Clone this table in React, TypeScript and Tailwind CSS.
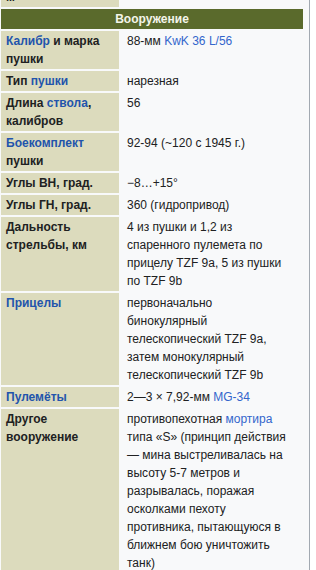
import React from "react";

type Row = { label: React.ReactNode; value: React.ReactNode };

// links inside the value column
const A = ({ children }: { children: React.ReactNode }) => (
  <a href="#" className="text-[#3366cc] no-underline">
    {children}
  </a>
);

// links inside the bold label column
const L = ({ children }: { children: React.ReactNode }) => (
  <a href="#" className="text-[#2254ac] no-underline">
    {children}
  </a>
);

const rows: Row[] = [
  {
    label: (
      <>
        <L>Калибр</L> и марка пушки
      </>
    ),
    value: (
      <>
        88-мм <A>KwK 36 L/56</A>
      </>
    ),
  },
  {
    label: (
      <>
        Тип <L>пушки</L>
      </>
    ),
    value: "нарезная",
  },
  {
    label: (
      <>
        Длина <L>ствола</L>, калибров
      </>
    ),
    value: "56",
  },
  {
    label: (
      <>
        <L>Боекомплект</L> пушки
      </>
    ),
    value: "92-94 (~120 с 1945 г.)",
  },
  { label: "Углы ВН, град.", value: "−8…+15°" },
  { label: "Углы ГН, град.", value: "360 (гидропривод)" },
  {
    label: "Дальность стрельбы, км",
    value:
      "4 из пушки и 1,2 из спаренного пулемета по прицелу TZF 9a, 5 из пушки по TZF 9b",
  },
  {
    label: <L>Прицелы</L>,
    value:
      "первоначально бинокулярный телескопический TZF 9a, затем монокулярный телескопический TZF 9b",
  },
  {
    label: <L>Пулемёты</L>,
    value: (
      <>
        2—3 × 7,92-мм <A>MG-34</A>
      </>
    ),
  },
  {
    label: "Другое вооружение",
    value: (
      <>
        противопехотная <A>мортира</A> типа «S» (принцип действия — мина
        выстреливалась на высоту 5-7 метров и разрывалась, поражая осколками
        пехоту противника, пытающуюся в ближнем бою уничтожить танк)
      </>
    ),
  },
];

export default function App() {
  return (
    <div
      className="w-[316px] h-[570px] overflow-hidden bg-white text-[12px] leading-[18px] text-[#202122]"
      style={{ fontFamily: '"Liberation Sans", Arial, sans-serif' }}
    >
      <div className="w-[310px] min-h-full bg-[#f8f9fa] border-r border-[#a2a9b1] pl-px">
        <div className="grid grid-cols-[118px_182px] gap-[2px] w-[302px]">
          {/* previous row, scrolled mostly out of view */}
          <div className="h-[7px] overflow-hidden bg-[#dcdbbd] flex flex-col justify-end px-[5px] pb-px font-bold">
            <div>м</div>
          </div>
          <div className="h-[7px]" />

          <div className="col-span-2 h-[20px] bg-[#5a6a2c] text-[#f4f5ea] font-bold text-center leading-[20px]">
            Вооружение
          </div>

          {rows.map((r, i) => (
            <React.Fragment key={i}>
              <div className="bg-[#dcdbbd] font-bold px-[5px] py-px">
                {r.label}
              </div>
              <div className="pl-[6px] pr-[10px] py-px">{r.value}</div>
            </React.Fragment>
          ))}
        </div>
      </div>
    </div>
  );
}
